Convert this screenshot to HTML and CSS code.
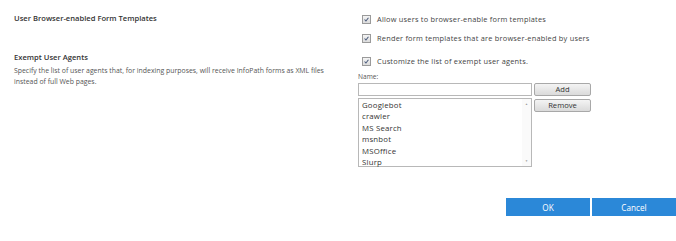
FILE: index.html
```html
<!DOCTYPE html>
<html lang="en">
<head>
    <meta charset="UTF-8">
    <title>InfoPath Forms Services Settings</title>
    <link rel="stylesheet" href="styles.css">
</head>
<body>
    <div class="page">
        <div class="section first">
            <div class="section-info">
                <h3>User Browser-enabled Form Templates</h3>
            </div>
            <div class="section-controls">
                <div class="check-row">
                    <span class="check"><svg viewBox="0 0 9 9" width="9" height="9"><path d="M2 4.5 L3.8 6.5 L7 2.3" fill="none" stroke="#4a5a7a" stroke-width="1.3"/></svg></span>
                    <span>Allow users to browser-enable form templates</span>
                </div>
                <div class="check-row">
                    <span class="check"><svg viewBox="0 0 9 9" width="9" height="9"><path d="M2 4.5 L3.8 6.5 L7 2.3" fill="none" stroke="#4a5a7a" stroke-width="1.3"/></svg></span>
                    <span>Render form templates that are browser-enabled by users</span>
                </div>
            </div>
        </div>

        <div class="section second">
            <div class="section-info">
                <h3>Exempt User Agents</h3>
                <p>Specify the list of user agents that, for indexing purposes, will receive InfoPath forms as XML files instead of full Web pages.</p>
            </div>
            <div class="section-controls">
                <div class="check-row">
                    <span class="check"><svg viewBox="0 0 9 9" width="9" height="9"><path d="M2 4.5 L3.8 6.5 L7 2.3" fill="none" stroke="#4a5a7a" stroke-width="1.3"/></svg></span>
                    <span>Customize the list of exempt user agents.</span>
                </div>
                <div class="name-label">Name:</div>
                <div class="agent-grid">
                    <div class="text-box"></div>
                    <button class="small-btn">Add</button>
                    <div class="list-box">
                        <ul class="agents">
                            <li>Googlebot</li>
                            <li>crawler</li>
                            <li>MS Search</li>
                            <li>msnbot</li>
                            <li>MSOffice</li>
                            <li>Slurp</li>
                        </ul>
                        <div class="scroll">
                            <span class="arrow">&#9650;</span>
                            <span class="arrow">&#9660;</span>
                        </div>
                    </div>
                    <button class="small-btn">Remove</button>
                </div>
            </div>
        </div>

        <div class="footer">
            <button class="action-btn">OK</button>
            <button class="action-btn">Cancel</button>
        </div>
    </div>
</body>
</html>
```

FILE: styles.css
```css
* {
    margin: 0;
    padding: 0;
    box-sizing: border-box;
}

body {
    background: #fff;
    color: #444;
    font-family: 'Open Sans', 'Segoe UI', sans-serif;
    width: 676px;
    height: 241px;
    overflow: hidden;
}

.page {
    padding-top: 13px;
}

.section {
    display: flex;
}

.section-info {
    width: 344px;
    padding-left: 14px;
}

.section-info h3 {
    font-size: 7.6px;
    font-weight: 600;
    color: #333;
    line-height: 11px;
}

.section-info p {
    font-size: 6.9px;
    color: #555;
    line-height: 10.5px;
    margin-top: 3px;
    padding-right: 4px;
}

.section-controls {
    padding-left: 16px;
}

.section.second {
    margin-top: 4px;
}

.section.second .section-info h3 {
    margin-top: -3px;
}

.check-row {
    display: flex;
    align-items: center;
    gap: 6px;
    font-size: 7.4px;
    color: #444;
    height: 12px;
    margin-bottom: 7px;
    letter-spacing: 0.22px;
}

.check {
    width: 9px;
    height: 9px;
    border: 1px solid #9a9a9a;
    background: linear-gradient(#f4f4f4, #dcdcdc);
    display: flex;
    align-items: center;
    justify-content: center;
    margin-left: 2px;
}

.check svg {
    width: 7px;
    height: 7px;
}

.name-label {
    font-size: 6.6px;
    color: #555;
    margin-top: -2px;
    margin-left: -2px;
    line-height: 10px;
}

.agent-grid {
    display: grid;
    grid-template-columns: 174px 57px;
    column-gap: 2px;
    row-gap: 2px;
    margin-left: -2px;
    margin-top: 1px;
    align-items: start;
}

.text-box {
    height: 13px;
    border: 1px solid #b8b8b8;
    background: #fff;
}

.small-btn {
    height: 13px;
    border: 1px solid #a8a8a8;
    border-radius: 2px;
    background: linear-gradient(#f4f4f4, #dadada);
    font-family: 'Open Sans', 'Segoe UI', sans-serif;
    font-size: 7.6px;
    color: #333;
    line-height: 11px;
}

.list-box {
    height: 69px;
    border: 1px solid #b8b8b8;
    display: flex;
}

.agents {
    list-style: none;
    flex: 1;
    padding: 1px 0 0 3px;
    font-size: 7.8px;
    color: #333;
    line-height: 11.4px;
    letter-spacing: 0.2px;
}

.list-box + .small-btn {
    margin-top: 1px;
}

.scroll {
    width: 9px;
    display: flex;
    flex-direction: column;
    justify-content: space-between;
    align-items: center;
    background: #fafafa;
    padding: 3px 0;
}

.arrow {
    font-size: 3px;
    color: #999;
    line-height: 4px;
}

.footer {
    display: flex;
    justify-content: flex-end;
    gap: 2px;
    margin-top: 31px;
}

.action-btn {
    width: 84px;
    height: 18px;
    border: none;
    background: #2b88d8;
    color: #fff;
    font-family: 'Open Sans', 'Segoe UI', sans-serif;
    font-size: 8.2px;
}
```
